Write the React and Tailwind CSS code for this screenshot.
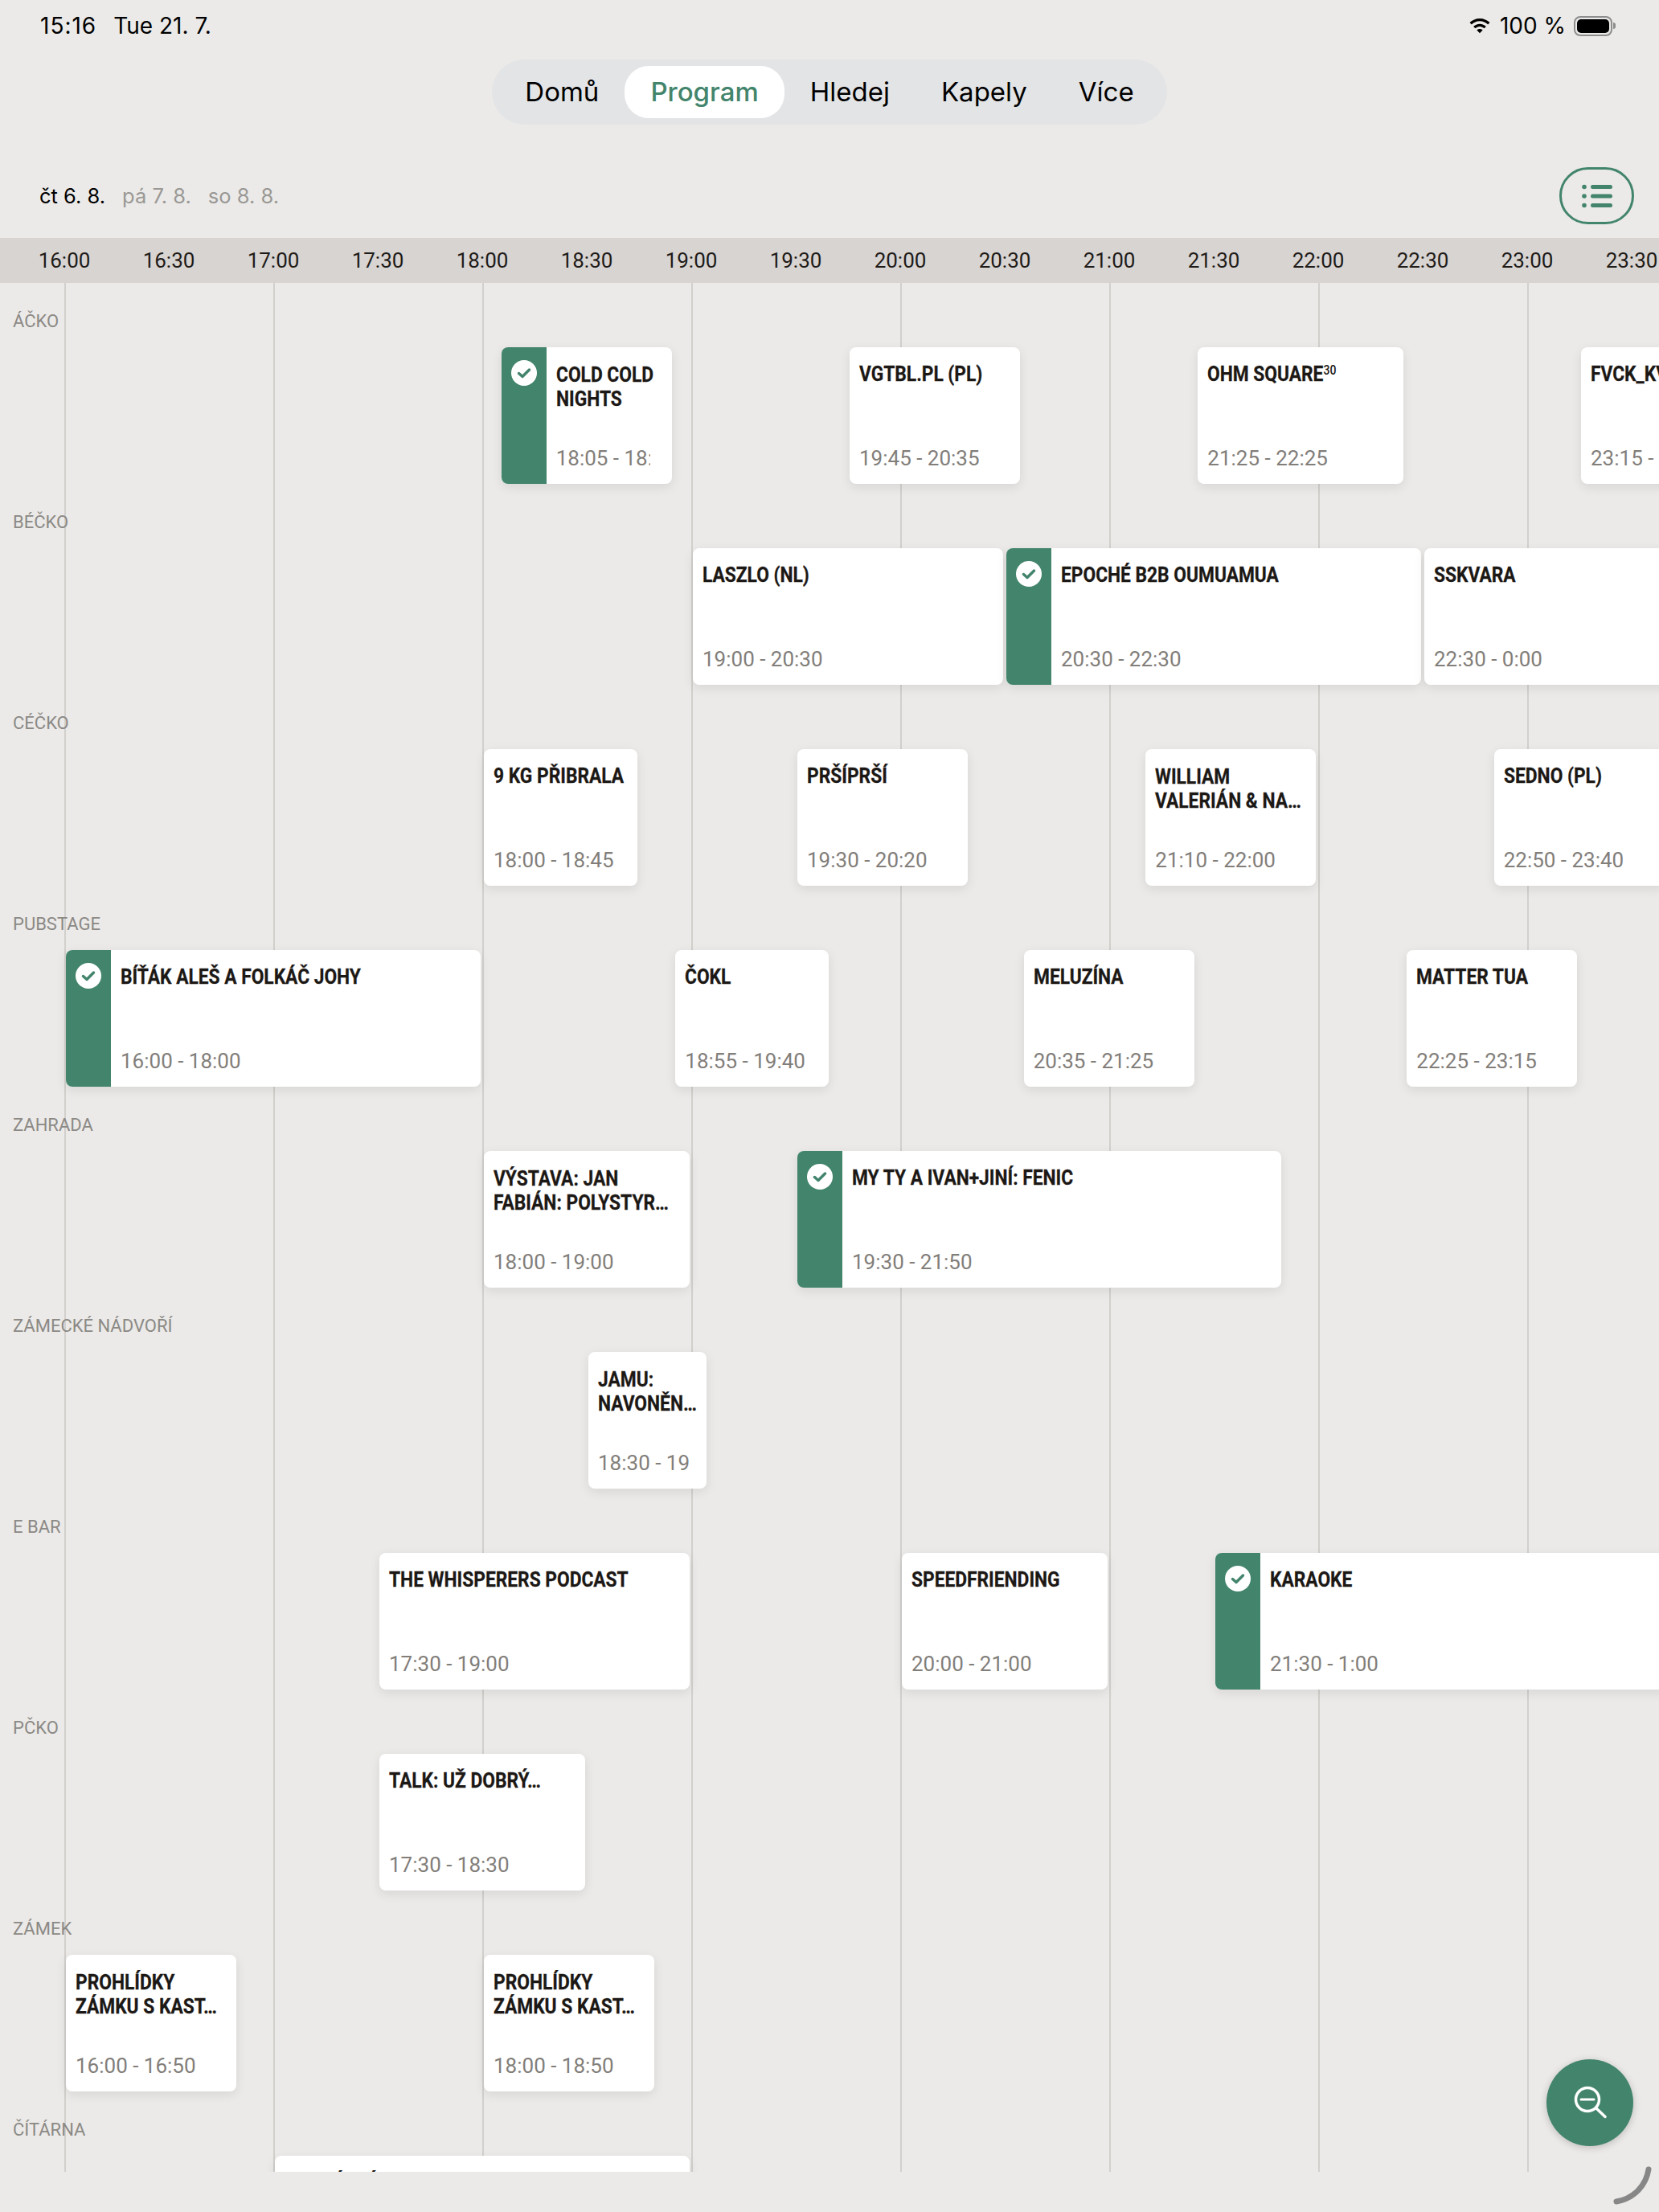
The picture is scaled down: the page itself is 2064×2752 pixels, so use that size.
const HOUR = 260;
const ORIGIN = 81;

const times = [
  "16:00", "16:30", "17:00", "17:30", "18:00", "18:30", "19:00", "19:30",
  "20:00", "20:30", "21:00", "21:30", "22:00", "22:30", "23:00", "23:30",
];

const hours = [0, 1, 2, 3, 4, 5, 6, 7];

const stages = [
  {
    name: "ÁČKO",
    shows: [
      { from: "18:05", to: "18:55", title: ["COLD COLD", "NIGHTS"], going: true },
      { from: "19:45", to: "20:35", title: ["VGTBL.PL (PL)"] },
      { from: "21:25", to: "22:25", title: ["OHM SQUARE"], sup: "30" },
      { from: "23:15", to: "24:05", title: ["FVCK_KVLT"], label: "23:15 - 0:05" },
    ],
  },
  {
    name: "BÉČKO",
    shows: [
      { from: "19:00", to: "20:30", title: ["LASZLO (NL)"] },
      { from: "20:30", to: "22:30", title: ["EPOCHÉ B2B OUMUAMUA"], going: true },
      { from: "22:30", to: "24:00", title: ["SSKVARA"], label: "22:30 - 0:00" },
    ],
  },
  {
    name: "CÉČKO",
    shows: [
      { from: "18:00", to: "18:45", title: ["9 KG PŘIBRALA"] },
      { from: "19:30", to: "20:20", title: ["PRŠÍPRŠÍ"] },
      { from: "21:10", to: "22:00", title: ["WILLIAM", "VALERIÁN & NA…"] },
      { from: "22:50", to: "23:40", title: ["SEDNO (PL)"] },
    ],
  },
  {
    name: "PUBSTAGE",
    shows: [
      { from: "16:00", to: "18:00", title: ["BÍŤÁK ALEŠ A FOLKÁČ JOHY"], going: true },
      { from: "18:55", to: "19:40", title: ["ČOKL"] },
      { from: "20:35", to: "21:25", title: ["MELUZÍNA"] },
      { from: "22:25", to: "23:15", title: ["MATTER TUA"] },
    ],
  },
  {
    name: "ZAHRADA",
    shows: [
      { from: "18:00", to: "19:00", title: ["VÝSTAVA: JAN", "FABIÁN: POLYSTYR…"] },
      { from: "19:30", to: "21:50", title: ["MY TY A IVAN+JINÍ: FENIC"], going: true },
    ],
  },
  {
    name: "ZÁMECKÉ NÁDVOŘÍ",
    shows: [{ from: "18:30", to: "19:05", title: ["JAMU:", "NAVONĚN…"] }],
  },
  {
    name: "E BAR",
    shows: [
      { from: "17:30", to: "19:00", title: ["THE WHISPERERS PODCAST"] },
      { from: "20:00", to: "21:00", title: ["SPEEDFRIENDING"] },
      { from: "21:30", to: "25:00", title: ["KARAOKE"], going: true, label: "21:30 - 1:00" },
    ],
  },
  {
    name: "PČKO",
    shows: [{ from: "17:30", to: "18:30", title: ["TALK: UŽ DOBRÝ…"] }],
  },
  {
    name: "ZÁMEK",
    shows: [
      { from: "16:00", to: "16:50", title: ["PROHLÍDKY", "ZÁMKU S KAST…"] },
      { from: "18:00", to: "18:50", title: ["PROHLÍDKY", "ZÁMKU S KAST…"] },
    ],
  },
  {
    name: "ČÍTÁRNA",
    shows: [{ from: "17:00", to: "19:00", title: ["LITERÁRNÍ KLUB"] }],
  },
];

function toMinutes(t) {
  const [h, m] = t.split(":").map(Number);
  return (h - 16) * 60 + m;
}

function Check() {
  return (
    <div className="absolute left-3 top-4 flex h-8 w-8 items-center justify-center rounded-full bg-white">
      <svg width="18" height="18" viewBox="0 0 18 18" fill="none">
        <path d="M2.5 9.5 7 13.5 15.5 5" stroke="#43856c" strokeWidth="3.5" strokeLinecap="round" strokeLinejoin="round" />
      </svg>
    </div>
  );
}

function Card({ show }) {
  const start = toMinutes(show.from);
  const end = toMinutes(show.to);
  const left = ORIGIN + (start * HOUR) / 60 + 1;
  const width = ((end - start) * HOUR) / 60 - 4.5;

  return (
    <div
      className="absolute top-20 flex h-[170px] overflow-hidden rounded-lg bg-white shadow-[0_4px_14px_rgba(0,0,0,0.09)]"
      style={{ left, width }}
    >
      {show.going && (
        <div className="relative h-full w-14 shrink-0 bg-[#43856c]">
          <Check />
        </div>
      )}
      <div
        className={
          show.going
            ? "flex min-w-0 flex-1 flex-col justify-between pb-[17px] pl-3 pr-[27px] pt-[19px] font-['Roboto',sans-serif]"
            : "flex min-w-0 flex-1 flex-col justify-between pb-[17px] pl-3 pr-5 pt-[19px] font-['Roboto',sans-serif]"
        }
      >
        <div
          className={
            show.title.length === 1
              ? "-mt-px text-[26px] font-bold leading-[30px] text-[#1c1815] [-webkit-text-stroke:0.3px_#1c1815]"
              : "text-[26px] font-bold leading-[30px] text-[#1c1815] [-webkit-text-stroke:0.3px_#1c1815]"
          }
        >
          {show.title.map((line) => (
            <div key={line} className="origin-left scale-x-[0.875] whitespace-nowrap">
              {line}
              {show.sup && <sup className="text-[16px] font-medium [-webkit-text-stroke:0]">{show.sup}</sup>}
            </div>
          ))}
        </div>
        <div className="overflow-hidden whitespace-nowrap text-[26px] leading-[30px] text-[#827e7a]">
          {show.label || `${show.from} - ${show.to}`}
        </div>
      </div>
    </div>
  );
}

export default function App() {
  return (
    <div className="relative h-[2752px] w-[2064px] overflow-hidden bg-[#ebeae8] font-['Inter',sans-serif] text-black">
      {/* STATUS BAR */}
      <div className="flex h-[64px] items-center justify-between pl-[50px] pr-[54px] text-[28px]">
        <div className="flex gap-[21px]">
          <span className="tracking-[1px]">15:16</span>
          <span>Tue 21. 7.</span>
        </div>
        <div className="flex items-center gap-[10px]">
          <svg width="30" height="20" viewBox="0 0 30 22" fill="#000">
            <path d="M15 1C9.5 1 4.7 3.2 1.2 6.7L3.8 9.4C6.6 6.5 10.6 4.7 15 4.7s8.4 1.8 11.2 4.7l2.6-2.7C25.3 3.2 20.5 1 15 1Z" />
            <path d="M15 8.4c-3.4 0-6.5 1.4-8.7 3.6l2.6 2.7c1.6-1.6 3.7-2.6 6.1-2.6s4.5 1 6.1 2.6l2.6-2.7c-2.2-2.2-5.3-3.6-8.7-3.6Z" />
            <path d="M15 15.4c-1.6 0-3 .6-4 1.6l4 4.2 4-4.2c-1-1-2.4-1.6-4-1.6Z" />
          </svg>
          <span>100 %</span>
          <div className="flex items-center">
            <div className="h-[25px] w-[48px] rounded-[8px] border-2 border-[#8d8d8d] p-[2px]">
              <div className="h-full w-full rounded-[5px] bg-black" />
            </div>
            <div className="ml-px h-[8px] w-[3px] rounded-r-full bg-[#8d8d8d]" />
          </div>
        </div>
      </div>

      {/* NAV */}
      <div className="mt-[10px] flex justify-center">
        <nav className="flex h-[81px] items-center rounded-full bg-[#e3e4e6] px-[9px] text-[33px]">
          <a className="px-8">Domů</a>
          <a className="flex h-[65px] items-center rounded-[30px] bg-white px-8 font-medium text-[#43856c]">Program</a>
          <a className="px-8">Hledej</a>
          <a className="px-8">Kapely</a>
          <a className="px-8">Více</a>
        </nav>
      </div>

      {/* DAYS */}
      <div className="mt-[53px] flex h-[71px] items-center justify-between pl-[49px] pr-[31px] text-[25.5px]">
        <div className="mt-0.5 flex gap-[21px]">
          <span>čt 6. 8.</span>
          <span className="text-[#9a9895]">pá 7. 8.</span>
          <span className="text-[#9a9895]">so 8. 8.</span>
        </div>
        <button className="flex h-[71px] w-[93px] items-center justify-center rounded-full border-[3.5px] border-[#43856c]">
          <svg width="38" height="30" viewBox="0 0 38 30" fill="#43856c">
            <circle cx="3" cy="3.5" r="2.8" />
            <rect x="11" y="1" width="27" height="5" rx="2.5" />
            <circle cx="3" cy="15" r="2.8" />
            <rect x="11" y="12.5" width="27" height="5" rx="2.5" />
            <circle cx="3" cy="26.5" r="2.8" />
            <rect x="11" y="24" width="27" height="5" rx="2.5" />
          </svg>
        </button>
      </div>

      {/* TIME HEADER */}
      <div className="mt-[17px] flex h-14 items-center bg-[#d7d4d2] pl-[15px] font-['Roboto',sans-serif] text-[26px] text-[#1f1b18]">
        {times.map((t) => (
          <div key={t} className="w-[130px] shrink-0 text-center">
            {t}
          </div>
        ))}
      </div>

      {/* GRID */}
      <div className="relative h-[2350px] overflow-hidden">
        {hours.map((h) => (
          <div
            key={h}
            className="absolute inset-y-0 w-0.5 bg-[#d2d0cd]"
            style={{ left: ORIGIN - 1 + h * HOUR }}
          />
        ))}
        {stages.map((stage) => (
          <div key={stage.name} className="relative h-[250px]">
            <div className="absolute left-4 top-[35px] font-['Roboto',sans-serif] text-[22px] leading-[26px] text-[#8b8985]">
              {stage.name}
            </div>
            {stage.shows.map((show) => (
              <Card key={show.from} show={show} />
            ))}
          </div>
        ))}
      </div>

      {/* ZOOM BUTTON */}
      <button className="absolute left-[1924px] top-[2562px] flex h-[108px] w-[108px] items-center justify-center rounded-full bg-[#43856c] shadow-[0_2px_10px_rgba(0,0,0,0.2)]">
        <svg width="44" height="44" viewBox="0 0 44 44" fill="none" stroke="#fff" strokeLinecap="round">
          <circle cx="19" cy="18" r="14.5" strokeWidth="3.5" />
          <path d="M29.5 28.5 41 39.5" strokeWidth="3.5" />
          <path d="M11 18h16" strokeWidth="3" />
        </svg>
      </button>

      {/* PENCIL CURVE */}
      <svg className="absolute left-[2000px] top-[2690px]" width="60" height="56" viewBox="0 0 60 56" fill="none">
        <path d="M51 9C48 28 34 45 11 49" stroke="#878787" strokeWidth="7" strokeLinecap="round" />
      </svg>
    </div>
  );
}
